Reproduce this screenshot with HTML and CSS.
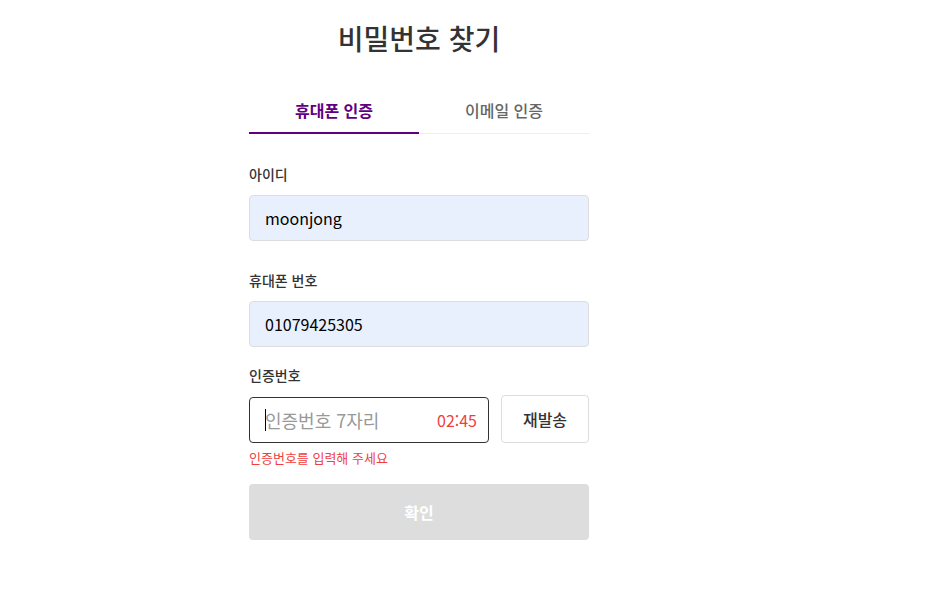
FILE: index.html
```html
<!DOCTYPE html>
<html lang="ko">
<head>
<meta charset="utf-8">
<title>비밀번호 찾기</title>
<link rel="stylesheet" href="styles.css">
</head>
<body>
<main class="page">
  <h2 class="title">비밀번호 찾기</h2>
  <div class="tabs">
    <div class="tab tab-active">휴대폰 인증</div>
    <div class="tab">이메일 인증</div>
  </div>
  <form class="form">
    <div class="field">
      <label class="label">아이디</label>
      <div class="input filled">moonjong</div>
    </div>
    <div class="field">
      <label class="label">휴대폰 번호</label>
      <div class="input filled">01079425305</div>
    </div>
    <div class="field field-code">
      <label class="label">인증번호</label>
      <div class="code-row">
        <div class="input code-input">
          <span class="caret"></span><span class="placeholder">인증번호 7자리</span>
          <span class="timer">02:45</span>
        </div>
        <button type="button" class="resend">재발송</button>
      </div>
      <p class="error">인증번호를 입력해 주세요</p>
    </div>
    <button type="button" class="submit">확인</button>
  </form>
</main>
</body>
</html>
```
FILE: styles.css
```css
* { box-sizing: border-box; }
html, body { margin: 0; padding: 0; background: #fff; }
body {
  font-family: "Noto Sans CJK KR", "Noto Sans", sans-serif;
  color: #333;
}
.page {
  width: 340px;
  margin-left: 249px;
  padding-top: 17px;
}
.title {
  margin: 0;
  text-align: center;
  font-size: 28px;
  line-height: 42px;
  font-weight: 500;
  color: #333;
}
.tabs {
  display: flex;
  margin-top: 31px;
}
.tab {
  flex: 1;
  height: 44px;
  text-align: center;
  font-size: 16px;
  line-height: 40px;
  color: #666;
  border-bottom: 1px solid #eee;
  font-weight: 500;
}
.tab-active {
  color: #5f0080;
  border-bottom: 2px solid #5f0080;
  font-weight: 700;
}
.form {
  display: flex;
  flex-direction: column;
  padding-top: 30px;
}
.field { display: flex; flex-direction: column; }
.field + .field { margin-top: 29px; }
.field.field-code { margin-top: 18px; }
.label {
  font-size: 14px;
  line-height: 20px;
  font-weight: 500;
  color: #333;
  margin-bottom: 11px;
}
.field-code .label { margin-bottom: 10px; }
.input {
  height: 46px;
  border: 1px solid #ddd;
  border-radius: 4px;
  padding: 0 15px;
  font-size: 16px;
  line-height: 44px;
  color: #000;
  display: flex;
  align-items: center;
}
.filled { background: #e8f0fe; }
.code-row {
  display: flex;
  gap: 12px;
  align-items: flex-end;
}
.code-input {
  flex: 0 0 240px;
  border-color: #333;
  background: #fff;
}
.caret {
  display: inline-block;
  width: 1px;
  height: 22px;
  background: #000;
  margin-right: -1px;
}
.placeholder { color: #999; flex: 1; font-size: 18px; }
.timer { color: #f03f40; margin-right: -4px; }
.resend {
  flex: 1;
  height: 48px;
  border: 1px solid #ddd;
  border-radius: 4px;
  background: #fff;
  font-family: inherit;
  font-size: 16px;
  font-weight: 500;
  color: #333;
  padding: 0;
}
.error {
  margin: 7px 0 0;
  font-size: 13px;
  line-height: 16px;
  color: #f03f40;
}
.submit {
  margin-top: 18px;
  height: 56px;
  border: 0;
  border-radius: 4px;
  background: #ddd;
  color: #fff;
  font-family: inherit;
  font-size: 16px;
  font-weight: 700;
  padding: 0;
}
```
